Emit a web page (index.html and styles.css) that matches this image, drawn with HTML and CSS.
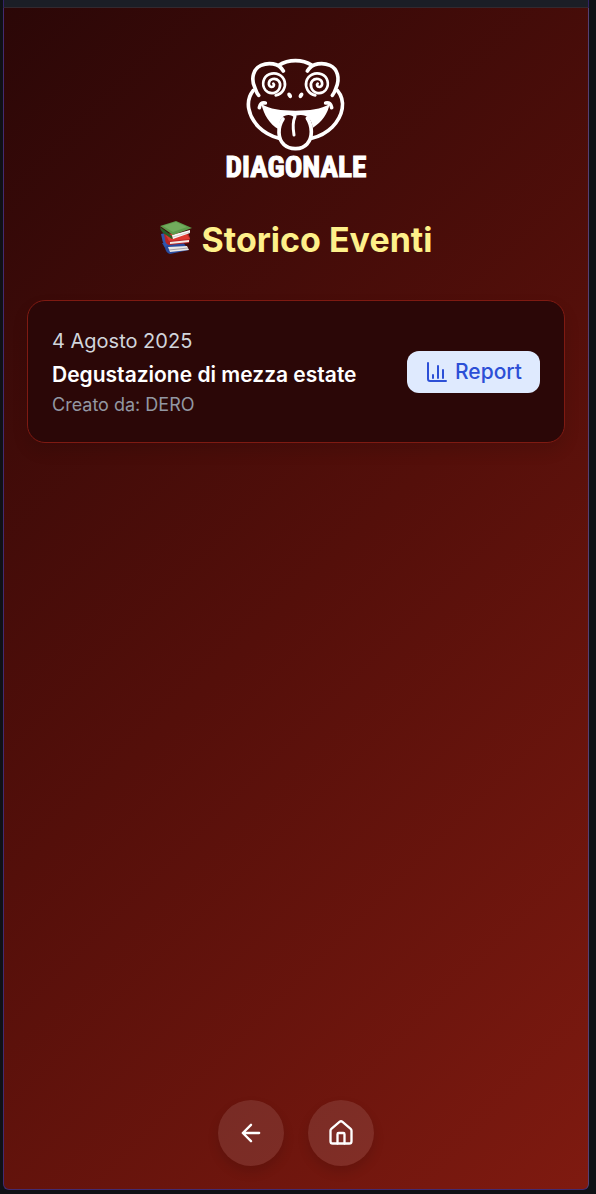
FILE: index.html
```html
<!DOCTYPE html>
<html lang="it">
<head>
<meta charset="utf-8">
<meta name="viewport" content="width=device-width, initial-scale=1">
<title>Storico Eventi</title>
<link rel="stylesheet" href="styles.css">
</head>
<body>
<div class="topbar"></div>
<div class="screen">
  <header class="header">
    <svg class="logo" viewBox="-2 0 465 405" role="img" aria-label="Diagonale">
      <g fill="none" stroke="#fff" stroke-width="11" stroke-linecap="round" stroke-linejoin="round">
        <path d="M177 46C207 27 248 27 277 46"/>
        <path d="M191 63C177 38 145 37 124 46C102 56 92 84 106 114C109 123 111 129 117 136"/>
        <path d="M263 63C278 38 310 37 331 46C353 56 362 84 349 114C346 123 344 129 338 136"/>
        <path d="M101 121C75 153 85 198 117 231C135 249 155 259 178 265"/>
        <path d="M353 121C380 153 370 198 338 231C320 249 300 259 276 265"/>
        <path d="M119 173C121 162 126 157 137 159M336 173C334 162 329 157 318 159"/>
        <path d="M190 207C173 232 174 266 193 284C212 301 246 300 263 281C279 262 279 230 263 205"/>
      </g>
      <path fill="#fff" d="M125 162C151 178 184 182 227 182C270 182 304 178 330 162C325 189 307 216 279 234C277 207 260 194 242 195C233 195 228 197 224 203C216 193 197 192 187 204C180 211 177 223 177 238C149 222 133 195 125 162Z"/>
      <path fill="none" stroke="#fff" stroke-width="9" stroke-linecap="round" d="M226 200C220 213 219 232 223 255"/>
      <g fill="none" stroke="#fff" stroke-width="8" stroke-linecap="round">
        <path d="M168 136C190 132 199 111 195 95C190 75 168 65 149 73C130 81 125 104 137 120C149 135 174 132 180 113C186 96 173 84 159 87C145 90 144 108 155 111C163 112 165 104 161 101"/>
        <path d="M287 136C265 132 256 111 260 95C265 75 287 65 306 73C325 81 330 104 318 120C306 135 281 132 275 113C269 96 282 84 296 87C310 90 311 108 300 111C292 112 290 104 294 101"/>
      </g>
      <g fill="#fff"><ellipse cx="210" cy="136" rx="6" ry="9" transform="rotate(-30 210 136)"/><ellipse cx="244" cy="136" rx="6" ry="9" transform="rotate(30 244 136)"/></g>
      <text class="wordmark" x="229" y="380" text-anchor="middle">DIAGONALE</text>
    </svg>
    <h1 class="title">
      <svg class="books" viewBox="0 0 32 34" aria-hidden="true">
        <path fill="#294b9e" d="M2 22L22 20L29 29L10 33Q6 32 5 27Z"/>
        <path fill="#ece8e4" d="M8 26L27 25L29 29L10 31Z"/>
        <path stroke="#a6a3aa" d="M9 29L28 27"/>
        <path fill="#3156ad" d="M1 13L5 12L8 24L5 26Q2 20 1 13Z"/>
        <path fill="#b82525" d="M4 13L28 12L30 17L29 22L9 24Q5 23 5 18Z"/>
        <path fill="#f5e9e3" d="M10 21L29 19V21L10 23Z"/>
        <path fill="#dd3930" d="M5 13L26 12L30 18L9 20Z"/>
        <path fill="#285f27" d="M0 6L11 14Q14 17 12 18L3 12Q0 9 0 6Z"/>
        <path fill="#fafafa" d="M12 14L30 9L30 12L13 18Z"/>
        <path stroke="#aeb6ae" stroke-width=".6" d="M13 16L30 11"/>
        <path fill="#5d9b4b" d="M0 5L16 0L32 7L13 14Z"/>
        <path fill="#87bd70" opacity=".5" d="M3 5L16 1L27 6L13 11Z"/>
      </svg>
      <span>Storico Eventi</span>
    </h1>
  </header>
  <main class="events">
    <article class="card">
      <div class="details">
        <time class="date" datetime="2025-08-04">4 Agosto 2025</time>
        <h2 class="name">Degustazione di mezza estate</h2>
        <p class="author">Creato da: DERO</p>
      </div>
      <button class="report" type="button">
        <svg class="report-icon" viewBox="0 0 24 24" aria-hidden="true"><path d="M3 3v16a2 2 0 0 0 2 2h16M8 18v-3M13 18V6M18 18v-8"/></svg>
        Report
      </button>
    </article>
  </main>
  <nav class="nav" aria-label="Navigazione">
    <button class="round" type="button" aria-label="Indietro">
      <svg viewBox="0 0 24 24" aria-hidden="true"><path d="m12 19-7-7 7-7M19 12H5"/></svg>
    </button>
    <button class="round" type="button" aria-label="Home">
      <svg viewBox="0 0 24 24" aria-hidden="true"><path d="M15 21v-8a1 1 0 0 0-1-1h-4a1 1 0 0 0-1 1v8"/><path d="M3 10a2 2 0 0 1 .709-1.528l7-5.999a2 2 0 0 1 2.582 0l7 5.999A2 2 0 0 1 21 10v9a2 2 0 0 1-2 2H5a2 2 0 0 1-2-2z"/></svg>
    </button>
  </nav>
</div>
</body>
</html>
```
FILE: styles.css
```css
* {
  box-sizing: border-box;
}

body {
  margin: 0;
  padding: 0 7px 4px 3px;
  min-height: 100vh;
  display: flex;
  flex-direction: column;
  background: #0f1115;
  font-family: Inter, "Noto Sans", sans-serif;
}

.topbar {
  height: 8px;
  background: #1b1e26;
  border: solid #332366;
  border-width: 0 1px;
  border-bottom: 1px solid #33292f;
}

.screen {
  flex: 1;
  display: flex;
  flex-direction: column;
  padding: 48px 23px 23px;
  border: 1px solid #432b70;
  border-top: 0;
  border-right-color: #554073;
  border-radius: 0 0 6px 6px;
  background: linear-gradient(135deg, #2b0707, #540f0a 50%, #7f1a10);
}

.header {
  display: flex;
  flex-direction: column;
  align-items: center;
}

.logo {
  width: 155px;
  height: 135px;
  margin-top: -6px;
}

.wordmark {
  fill: #fff;
  stroke: #fff;
  stroke-width: 3px;
  font: bold 88px "Liberation Sans Narrow", "Roboto Condensed", "Liberation Sans", sans-serif;
}

.title {
  display: flex;
  align-items: center;
  gap: 10px;
  margin: 35px 0 0;
  color: #fef08a;
  font-size: 34px;
  line-height: 40px;
  font-weight: 700;
}

.books {
  width: 32px;
  height: 34px;
  margin-bottom: 4px;
}

.events {
  margin-top: 40px;
}

.card {
  display: flex;
  align-items: center;
  justify-content: space-between;
  padding: 24px;
  border: 1px solid #7f1a12;
  border-radius: 18px;
  background: #2b0707;
  box-shadow: 0 8px 16px rgba(0, 0, 0, 0.12);
}

.date {
  display: block;
  color: #d1d5db;
  font-size: 20px;
  line-height: 33px;
}

.name {
  margin: 0;
  color: #fff;
  font-size: 21px;
  line-height: 34px;
  font-weight: 600;
}

.author {
  margin: 0;
  color: #9297a2;
  font-size: 18px;
  line-height: 26px;
}

.report {
  display: flex;
  align-items: center;
  gap: 6px;
  padding: 6px 18px;
  border: 0;
  border-radius: 12px;
  background: #dfeafe;
  color: #2c4fd6;
  font: 500 21px/30px Inter, sans-serif;
}

.report svg,
.round svg {
  fill: none;
  stroke: currentColor;
  stroke-width: 2;
  stroke-linecap: round;
  stroke-linejoin: round;
}

.report-icon {
  width: 24px;
  height: 24px;
}

.nav {
  display: flex;
  justify-content: center;
  gap: 24px;
  margin-top: auto;
}

.round {
  display: grid;
  place-items: center;
  width: 66px;
  height: 66px;
  padding: 0;
  border: 0;
  border-radius: 50%;
  background: rgba(255, 255, 255, 0.1);
  color: #fff;
  box-shadow: 0 6px 12px rgba(0, 0, 0, 0.12);
}

.round svg {
  width: 28px;
  height: 28px;
}
```
